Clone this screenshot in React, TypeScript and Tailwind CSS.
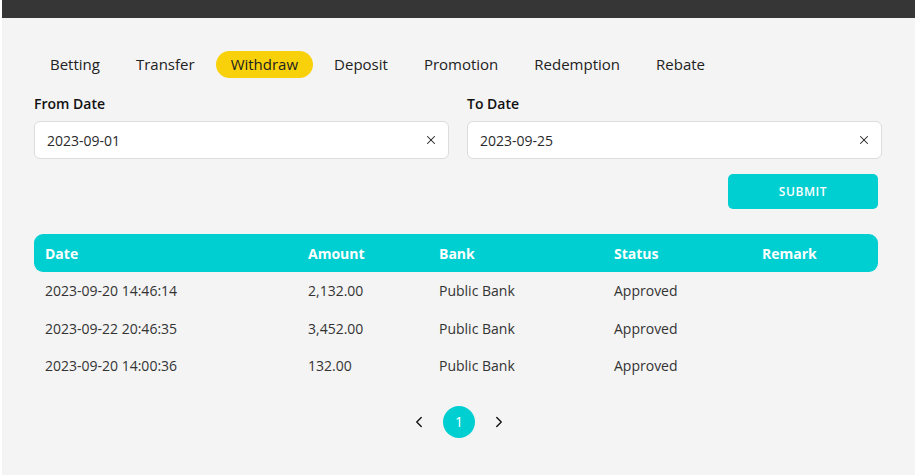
import React, { useState } from 'react';
import { X, ChevronLeft, ChevronRight } from 'lucide-react';

const tabs = ['Betting', 'Transfer', 'Withdraw', 'Deposit', 'Promotion', 'Redemption', 'Rebate'];

const rows = [
  { date: '2023-09-20 14:46:14', amount: '2,132.00', bank: 'Public Bank', status: 'Approved', remark: '' },
  { date: '2023-09-22 20:46:35', amount: '3,452.00', bank: 'Public Bank', status: 'Approved', remark: '' },
  { date: '2023-09-20 14:00:36', amount: '132.00', bank: 'Public Bank', status: 'Approved', remark: '' },
];

function DateField({ label, value }: { label: string; value: string }) {
  return (
    <div className="flex flex-col">
      <label className="text-[14px] font-semibold text-[#111] leading-[17px] mb-[9px]">{label}</label>
      <div className="flex items-center h-[38px] bg-white border border-[#dcdcdc] rounded-[6px] pl-[12px] pr-[10px]">
        <span className="flex-1 text-[14px] text-[#2a2a2a]">{value}</span>
        <X className="w-[14px] h-[14px] text-[#222]" strokeWidth={1.8} />
      </div>
    </div>
  );
}

export default function App() {
  const [active, setActive] = useState('Withdraw');

  return (
    <div
      className="w-[920px] h-[475px] bg-white pl-[2px] pr-[5px]"
      style={{ fontFamily: '"Open Sans", "Liberation Sans", sans-serif' }}
    >
      <div className="h-full bg-[#f4f4f4] flex flex-col">
        {/* top bar */}
        <div className="h-[18px] bg-[#363636]" />

        <div className="pl-[32px] pr-[33px]">
          {/* tabs */}
          <div className="flex gap-[6px] mt-[33px] ml-[1px]">
            {tabs.map((t) => (
              <button
                key={t}
                onClick={() => setActive(t)}
                className={
                  'h-[27px] px-[15px] rounded-full text-[15px] text-[#222] leading-none ' +
                  (active === t ? 'bg-[#f8d10b]' : '')
                }
              >
                {t}
              </button>
            ))}
          </div>

          {/* date filters */}
          <div className="grid grid-cols-2 gap-[18px] mt-[17px]">
            <DateField label="From Date" value="2023-09-01" />
            <DateField label="To Date" value="2023-09-25" />
          </div>

          <div className="flex justify-end mt-[15px] pr-[4px]">
            <button className="w-[150px] h-[35px] rounded-[5px] bg-[#00cfd1] text-white text-[12px] font-semibold tracking-[0.6px]">
              SUBMIT
            </button>
          </div>

          {/* table */}
          <div className="mt-[25px] mr-[4px]">
            <div className="grid grid-cols-[263px_131px_175px_148px_1fr] h-[38px] items-center bg-[#00cfd1] rounded-[9px] text-white text-[14px] font-bold">
              <div className="pl-[11px]">Date</div>
              <div className="pl-[11px]">Amount</div>
              <div className="pl-[11px]">Bank</div>
              <div className="pl-[11px]">Status</div>
              <div className="pl-[11px]">Remark</div>
            </div>
            {rows.map((r, i) => (
              <div
                key={i}
                className="grid grid-cols-[263px_131px_175px_148px_1fr] h-[37.5px] items-center text-[14px] text-[#333]"
              >
                <div className="pl-[11px]">{r.date}</div>
                <div className="pl-[11px]">{r.amount}</div>
                <div className="pl-[11px]">{r.bank}</div>
                <div className="pl-[11px]">{r.status}</div>
                <div className="pl-[11px]">{r.remark}</div>
              </div>
            ))}
          </div>

          {/* pagination */}
          <div className="flex items-center justify-center gap-[15px] mt-[21px] ml-[2px]">
            <ChevronLeft className="w-[18px] h-[18px] text-[#111]" strokeWidth={1.8} />
            <div className="w-[32px] h-[32px] rounded-full bg-[#00cfd1] text-white text-[14px] flex items-center justify-center">
              1
            </div>
            <ChevronRight className="w-[18px] h-[18px] text-[#111]" strokeWidth={1.8} />
          </div>
        </div>
      </div>
    </div>
  );
}
